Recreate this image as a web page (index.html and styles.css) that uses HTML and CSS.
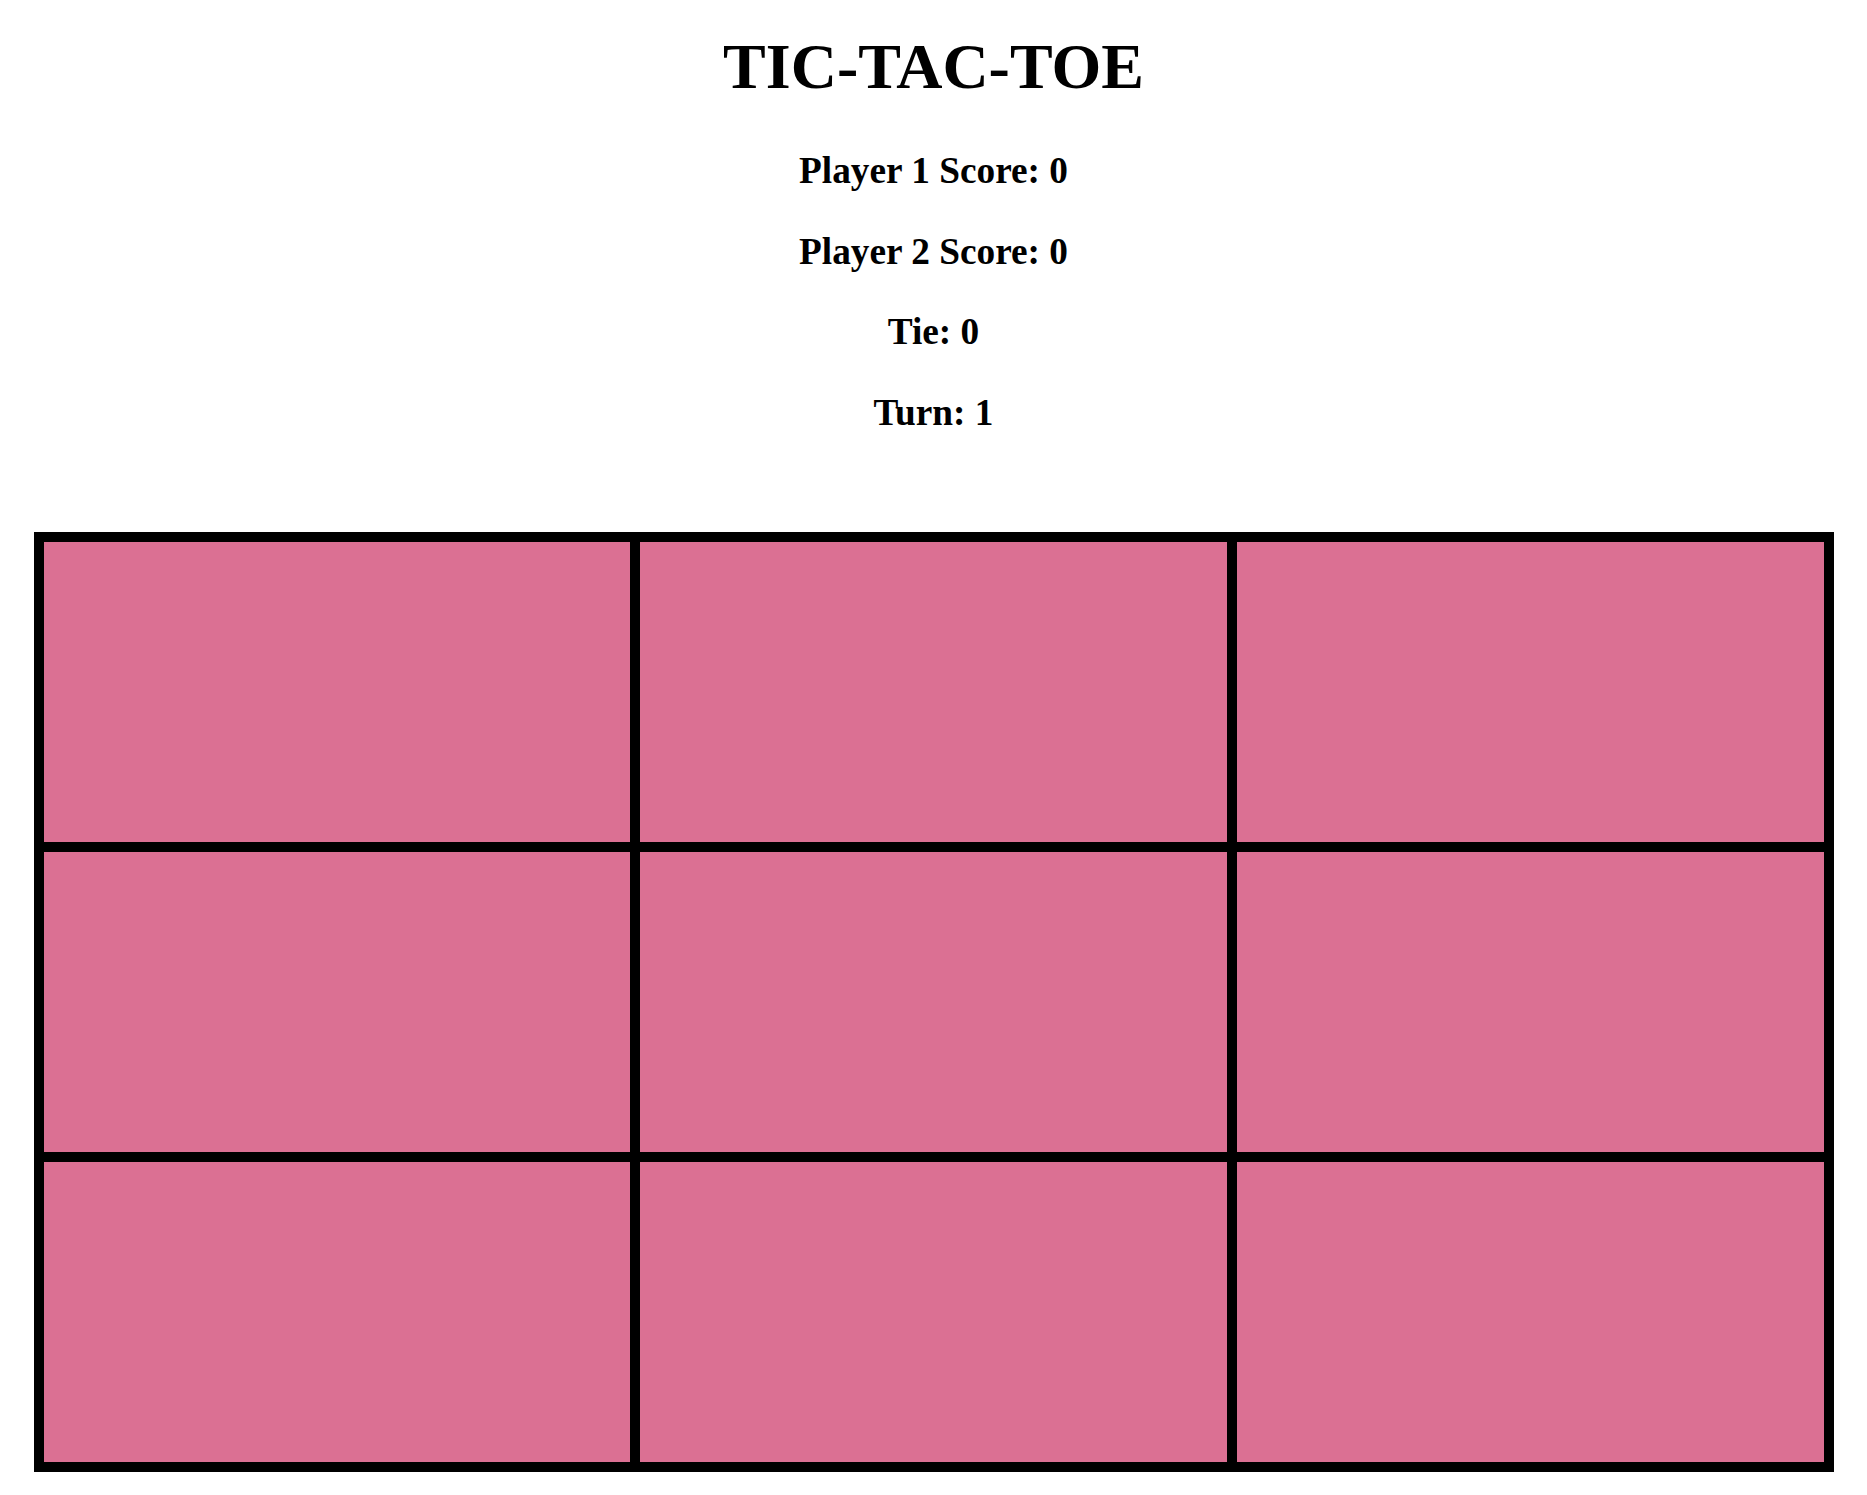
FILE: index.html
```html
<!DOCTYPE html>
<html lang="en">
<head>
    <meta charset="UTF-8">
    <title>Tic-Tac-Toe</title>
    <link rel="stylesheet" href="styles.css">
</head>
<body>

<h1 class="title">TIC-TAC-TOE</h1>

<div class="scores">
    <p class="score">Player 1 Score: <span id="score1">0</span></p>
    <p class="score">Player 2 Score: <span id="score2">0</span></p>
    <p class="score">Tie: <span id="ties">0</span></p>
    <p class="score">Turn: <span id="turn">1</span></p>
</div>

<div class="board">
    <div class="cell"></div>
    <div class="cell"></div>
    <div class="cell"></div>
    <div class="cell"></div>
    <div class="cell"></div>
    <div class="cell"></div>
    <div class="cell"></div>
    <div class="cell"></div>
    <div class="cell"></div>
</div>

</body>
</html>
```

FILE: styles.css
```css
body, h1, p {
    margin: 0;
    padding: 0;
}
body {
    font-family: "Liberation Serif", "Times New Roman", serif;
    color: #000;
    background-color: #fff;
    text-align: center;
}
.title {
    font-size: 64px;
    font-weight: bold;
    margin: 30px 0 45px;
}
.scores {
    display: flex;
    flex-direction: column;
    gap: 37.5px;
}
.score {
    font-size: 37.3px;
    font-weight: bold;
}
.board {
    box-sizing: border-box;
    width: 1800px;
    margin: 98px auto 0;
    border: 5px solid #000;
    display: grid;
    grid-template-columns: repeat(3, 1fr);
}
.cell {
    height: 300px;
    border: 5px solid #000;
    background-color: #db7093;
}
```
